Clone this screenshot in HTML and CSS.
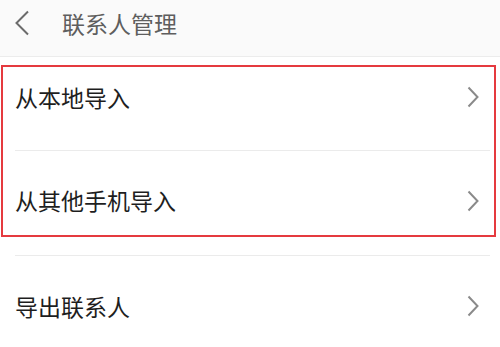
FILE: index.html
```html
<!DOCTYPE html>
<html lang="zh">
<head>
<meta charset="utf-8">
<link rel="stylesheet" href="styles.css">
</head>
<body>
<div class="screen">
  <header class="header">
    <svg class="back" width="16" height="26" viewBox="0 0 16 26"><path d="M14 1.5 L2.5 13 L14 24.5" fill="none" stroke="#6b6b6b" stroke-width="2"/></svg>
    <span class="title">联系人管理</span>
  </header>
  <div class="list">
    <div class="row"><span class="label">从本地导入</span><svg class="chev" width="12" height="22" viewBox="0 0 12 22"><path d="M1.5 1.5 L10.5 11 L1.5 20.5" fill="none" stroke="#8a8a8a" stroke-width="2"/></svg></div>
    <div class="row"><span class="label">从其他手机导入</span><svg class="chev" width="12" height="22" viewBox="0 0 12 22"><path d="M1.5 1.5 L10.5 11 L1.5 20.5" fill="none" stroke="#8a8a8a" stroke-width="2"/></svg></div>
    <div class="row last"><span class="label">导出联系人</span><svg class="chev" width="12" height="22" viewBox="0 0 12 22"><path d="M1.5 1.5 L10.5 11 L1.5 20.5" fill="none" stroke="#8a8a8a" stroke-width="2"/></svg></div>
  </div>
  <div class="highlight"></div>
</div>
</body>
</html>
```
FILE: styles.css
```css
html, body {
  margin: 0;
  padding: 0;
  background: #ffffff;
}
.screen {
  position: relative;
  width: 500px;
  height: 347px;
  overflow: hidden;
  font-family: "Noto Sans CJK SC", "Noto Sans", sans-serif;
}
.header {
  height: 57px;
  background: #fafafa;
  border-bottom: 1px solid #ececec;
  display: flex;
  align-items: center;
  padding-left: 14px;
  padding-bottom: 10px;
  box-sizing: border-box;
}
.back {
  display: block;
}
.title {
  margin-left: 32px;
  font-size: 23px;
  color: #5e5e5e;
  line-height: 1;
}
.list {
  padding: 0 10px 0 15px;
}
.row {
  height: 105px;
  display: flex;
  align-items: center;
  justify-content: space-between;
  border-bottom: 1px solid #ebebeb;
  box-sizing: border-box;
  padding-right: 11px;
  padding-bottom: 5px;
}
.row:first-child {
  height: 94px;
  padding-bottom: 13px;
}
.row.last {
  border-bottom: none;
}
.label {
  font-size: 23px;
  color: #1e1e1e;
  line-height: 1;
}
.chev {
  display: block;
}
.highlight {
  position: absolute;
  left: 1px;
  top: 65px;
  width: 495px;
  height: 172px;
  border: 2px solid #e53a3f;
  box-sizing: border-box;
}
```
